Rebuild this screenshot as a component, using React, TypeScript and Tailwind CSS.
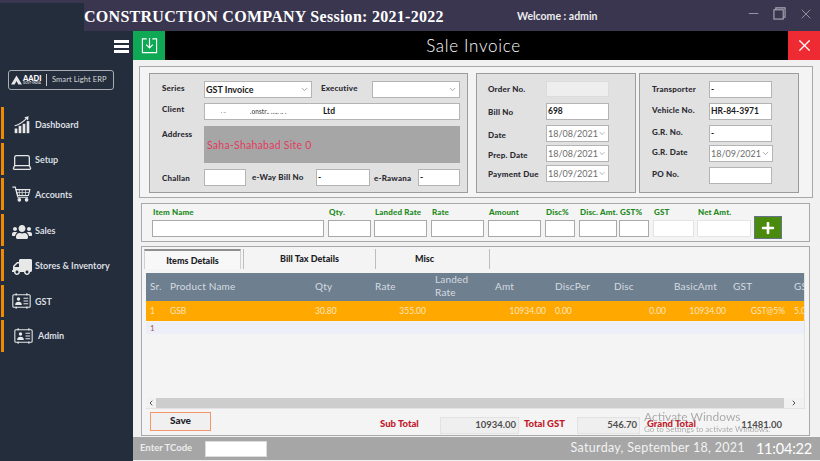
import React from "react";
import { Laptop, ChevronDown, ChevronLeft, ChevronRight, X, Minus } from "lucide-react";
import { FaUsers, FaTruck, FaPlus } from "react-icons/fa";

const Contact = ({ className = "" }: { className?: string }) => (
  <svg viewBox="0 0 28 24" className={className} fill="none">
    <rect x="1" y="2.5" width="26" height="19" rx="1.5" stroke="#e8e8e8" strokeWidth="1.6" />
    <rect x="5" y="0.5" width="2" height="3" fill="#e8e8e8" />
    <rect x="21" y="0.5" width="2" height="3" fill="#e8e8e8" />
    <rect x="5" y="20.5" width="2" height="3" fill="#e8e8e8" />
    <rect x="21" y="20.5" width="2" height="3" fill="#e8e8e8" />
    <circle cx="9.5" cy="9" r="2.6" fill="#e8e8e8" />
    <path d="M4.5 18c0-3.6 2-5 5-5s5 1.400 5 5z" fill="#e8e8e8" />
    <path d="M17 8h7M17 12h7M17 16h7" stroke="#e8e8e8" strokeWidth="1.6" />
  </svg>
);

const Chart = () => (
  <svg viewBox="0 0 24 26" className="w-[16px] h-[19px]" fill="#e8e8e8">
    <rect x="1" y="19" width="4" height="7" />
    <rect x="7" y="15" width="4" height="11" />
    <rect x="13" y="12" width="4" height="14" />
    <rect x="19" y="8" width="4" height="18" />
    <path d="M1 15 C8 13 15 8 19.500 3" stroke="#e8e8e8" strokeWidth="1.6" fill="none" />
    <path d="M15.500 2 L22 0.500 L21 7z" />
  </svg>
);

const Cart = () => (
  <svg viewBox="0 0 26 22" className="w-[19px] h-[16px]" fill="none" stroke="#e8e8e8" strokeWidth="1.5">
    <path d="M0.500 1.500h4l3.500 14h14" />
    <path d="M5.500 5h19l-2 8h-15z" />
    <path d="M10 5v8M14 5v8M18.500 5v8M6.500 9h17" strokeWidth="1" />
    <circle cx="10" cy="19" r="1.800" fill="#e8e8e8" />
    <circle cx="20" cy="19" r="1.800" fill="#e8e8e8" />
  </svg>
);

const nav: { label: string; icon: React.ReactNode; admin?: boolean }[] = [
  { label: "Dashboard", icon: <Chart /> },
  { label: "Setup", icon: <Laptop size={22} strokeWidth={1.4} color="#e8e8e8" /> },
  { label: "Accounts", icon: <Cart /> },
  { label: "Sales", icon: <FaUsers size={20} color="#e8e8e8" /> },
  { label: "Stores & Inventory", icon: <FaTruck size={20} color="#e8e8e8" className="-scale-x-100" /> },
  { label: "GST", icon: <Contact className="w-[19px] h-[16px]" /> },
  { label: "Admin", icon: <Contact className="w-[19px] h-[16px]" />, admin: true },
];

const Label = ({ children, className = "" }: { children: React.ReactNode; className?: string }) => (
  <span className={`text-[8px] font-black text-[#2b2b33] whitespace-nowrap tracking-[0.2px] ${className}`}>{children}</span>
);

const Field = ({ children, className = "" }: { children?: React.ReactNode; className?: string }) => (
  <div className={`h-[17px] bg-white border border-[#b4b4b4] flex items-center px-[1px] text-[8.5px] font-bold text-[#1a1a1a] ${className}`}>{children}</div>
);

const Select = ({ value, className = "", bold = false }: { value?: string; className?: string; bold?: boolean }) => (
  <div className={`h-[17px] bg-white border border-[#b4b4b4] flex items-center justify-between pl-[1px] pr-[2px] text-[9px] ${bold ? "font-bold text-[#1a1a1a] text-[8.5px]" : "text-[#6d6d6d]"} ${className}`}>
    <span className="whitespace-nowrap">{value}</span>
    <ChevronDown size={9} color="#8a8a8a" />
  </div>
);

const items: [string, string, number][] = [
  ["Item Name", "w-[172px]", 1],
  ["Qty.", "w-[43px]", 1],
  ["Landed Rate", "w-[53px]", 1],
  ["Rate", "w-[53px]", 1],
  ["Amount", "w-[53px]", 1],
  ["Disc%", "w-[30px]", 1],
  ["Disc. Amt.", "w-[38px]", 1],
  ["GST%", "w-[30px]", 1],
  ["GST", "w-[41px]", 0],
  ["Net Amt.", "w-[54px]", 0],
];

const itemGap = ["", "ml-[4px]", "ml-[3px]", "ml-[4px]", "ml-[4px]", "ml-[4px]", "ml-[4px]", "ml-[2px]", "ml-[4px]", "ml-[3px]"];

const cols: { h: React.ReactNode; v: string; w: string; cl: string }[] = [
  { h: "Sr.", v: "1", w: "w-[20px]", cl: "pl-[4px]" },
  { h: "Product Name", v: "GSB", w: "w-[145px]", cl: "pl-[4px]" },
  { h: "Qty", v: "30.80", w: "w-[60px]", cl: "pl-[4px]" },
  { h: "Rate", v: "355.00", w: "w-[60px]", cl: "pl-[4px] [&>.v]:text-right [&>.v]:pr-[5px]" },
  { h: <>Landed<br />Rate</>, v: "", w: "w-[60px]", cl: "pl-[4px]" },
  { h: "Amt", v: "10934.00", w: "w-[60px]", cl: "pl-[4px] [&>.v]:text-right [&>.v]:pr-[5px]" },
  { h: "DiscPer", v: "0.00", w: "w-[60px]", cl: "pl-[4px]" },
  { h: "Disc", v: "0.00", w: "w-[60px]", cl: "pl-[3px] [&>.v]:text-right [&>.v]:pr-[5px]" },
  { h: "BasicAmt", v: "10934.00", w: "w-[59px]", cl: "pl-[3px] [&>.v]:text-right [&>.v]:pr-[4px]" },
  { h: "GST", v: "GST@5%", w: "w-[60px]", cl: "pl-[3px] [&>.v]:text-right [&>.v]:pr-[5px]" },
  { h: "GST%", v: "5.00", w: "w-[60px]", cl: "pl-[4px]" },
];

export default function App() {
  return (
    <div className="w-[820px] h-[461px] overflow-hidden flex flex-col bg-[#232d3b] relative" style={{ fontFamily: "Lato, 'Noto Sans', sans-serif" }}>
      {/* Title bar */}
      <header className="h-[31px] shrink-0 bg-[#3a3650] flex items-center">
        <div className="w-[84px] h-[28px] mt-[3px] bg-[#232d3b] shrink-0" />
        <h1 className="text-[16px] font-bold text-white whitespace-nowrap w-[433px] pt-[3px] tracking-[0.28px]" style={{ fontFamily: "'Liberation Serif', serif" }}>
          CONSTRUCTION COMPANY Session: 2021-2022
        </h1>
        <span className="text-[10.5px] font-bold text-[#ececec] whitespace-nowrap pt-[3px]">Welcome : admin</span>
        <div className="ml-auto flex items-center gap-[12px] pr-[6px] pb-[4px]">
          <Minus size={15} color="#a9a9b4" strokeWidth={1.3} />
          <svg viewBox="0 0 14 14" className="w-[13px] h-[13px]" fill="none" stroke="#a9a9b4" strokeWidth="1.200">
            <rect x="1" y="3" width="10" height="10" />
            <path d="M3 3V1h10v10h-2" />
          </svg>
          <X size={16} color="#a9a9b4" strokeWidth={1.2} />
        </div>
      </header>

      <div className="flex flex-1 min-h-0">
        {/* Sidebar */}
        <aside className="w-[133px] shrink-0 flex flex-col">
          <div className="h-[29px] flex items-center justify-end pr-[4px] pt-[2px]">
            <div className="w-[15px] flex flex-col gap-[2.500px]">
              <div className="h-[2.500px] bg-white" />
              <div className="h-[2.500px] bg-white" />
              <div className="h-[2.500px] bg-white" />
            </div>
          </div>
          <div className="mt-[10px] ml-[8px] w-[106px] h-[20px] rounded-[3px] border border-[#a9acb2] flex items-center px-[2px] text-[#d8d8d8] whitespace-nowrap">
            <svg viewBox="0 0 12 10" className="w-[11px] h-[10px]" fill="#e6e6e6"><path d="M6 0 L12 10 H8 L6 6 L4 10 H0z" /></svg>
            <span className="flex flex-col leading-none ml-[1px] w-[22px]">
              <span className="text-[7.500px] font-black text-white">AADI</span>
              <span className="text-[3px] font-bold">GOVT-INDIA</span>
            </span>
            <span className="w-px h-[12px] bg-[#c8c8c8] ml-[1px] mr-[5px]" />
            <span className="text-[7.500px] tracking-[0.1px]">Smart Light ERP</span>
          </div>
          <nav className="mt-[17px] flex flex-col gap-[3.500px]">
            {nav.map((n, i) => (
              <div key={n.label} className="h-[32px] flex items-stretch">
                <div className="w-[3px] ml-[1px] bg-[#f28a00]" />
                <div className={`flex-1 flex ${n.admin ? "pl-[7px]" : "pl-[5px]"}`}>
                  <div className="w-[25px] pt-[8px] flex justify-center shrink-0">{n.icon}</div>
                  <span className={`text-[9px] font-bold text-[#dcdfe3] whitespace-nowrap ml-[1px] ${n.admin ? "mt-[9px] ml-[2px]" : i === 0 ? "mt-[11px]" : "mt-[10px]"}`}>{n.label}</span>
                </div>
              </div>
            ))}
          </nav>
        </aside>

        {/* Main */}
        <main className="flex-1 min-w-0 flex flex-col bg-[#f1f1f1]">
          <div className="h-[29px] shrink-0 bg-black flex items-stretch">
            <div className="w-[32px] bg-[#0fa855] flex items-center justify-center">
              <svg viewBox="0 0 18 18" className="w-[17px] h-[17px]" fill="none" stroke="#fff" strokeWidth="1.200">
                <path d="M6 2H1.500v14.500h15V2H12" />
                <path d="M9 1v10M5.500 8 9 11.500 12.500 8" />
              </svg>
            </div>
            <div className="flex-1 flex items-center justify-center text-white text-[17px] tracking-[0.7px] font-light pr-[6px]">Sale Invoice</div>
            <div className="w-[32px] bg-[#ee2a32] flex items-center justify-center">
              <X size={19} color="#fff" strokeWidth={1.6} />
            </div>
          </div>

          {/* Header form */}
          <section className="mt-[6px] ml-[6px] w-[674px] h-[132px] shrink-0 bg-[#f4f4f4] border border-[#a8a8a8] flex pl-[9px] pt-[6px]">
            {/* Group 1 */}
            <div className="w-[319px] h-[120px] bg-[#e1e1e1] border border-[#9c9c9c] flex flex-col pl-[12px] pt-[7px]">
              <div className="flex items-center h-[17px]">
                <Label className="w-[42px] pb-[3px]">Series</Label>
                <Select value="GST Invoice" bold className="w-[108px]" />
                <Label className="ml-[9px] w-[51px] pb-[3px]">Executive</Label>
                <Select className="w-[88px]" />
              </div>
              <div className="flex mt-[5px]">
                <Label className="w-[42px]">Client</Label>
                <Field className="w-[256px] pl-0 relative overflow-hidden">
                  <span className="ml-[16px] w-[29px] text-[5px] opacity-70 shrink-0">. ..</span>
                  <span className="w-[73px] text-[6.500px] opacity-70 blur-[0.4px] shrink-0 whitespace-nowrap">.onstr.. ..... .. .</span>
                  <span>Ltd</span>
                </Field>
              </div>
              <div className="flex mt-[6px]">
                <Label className="w-[42px] mt-[2px]">Address</Label>
                <div className="w-[256px] h-[37px] bg-[#a6a6a6] flex items-center pl-[3px] pt-[2px] text-[10.500px] text-[#e13c5f] tracking-[0.25px]">Saha-Shahabad Site 0</div>
              </div>
              <div className="flex items-center mt-[6px]">
                <Label className="w-[42px]">Challan</Label>
                <Field className="w-[42px]" />
                <Label className="ml-[6px] w-[64px] pb-[2px]">e-Way Bill No</Label>
                <Field className="w-[54px]">-</Field>
                <Label className="ml-[4px] w-[44px]">e-Rawana</Label>
                <Field className="w-[42px] border-[#3c3c3c]">-</Field>
              </div>
            </div>

            {/* Group 2 */}
            <div className="ml-[8px] w-[160px] h-[120px] bg-[#e1e1e1] border border-[#9c9c9c] flex flex-col pl-[11px] pt-[7px]">
              <div className="flex items-center">
                <Label className="w-[58px] pb-[1px]">Order No.</Label>
                <div className="w-[63px] h-[16px] bg-[#eeeeee] border border-[#dcdcdc]" />
              </div>
              <div className="flex items-center mt-[6px]">
                <Label className="w-[58px]">Bill No</Label>
                <Field className="w-[63px]">698</Field>
              </div>
              <div className="flex items-center mt-[5px]">
                <Label className="w-[58px] pt-[3px]">Date</Label>
                <Select value="18/08/2021" className="w-[63px]" />
              </div>
              <div className="flex items-center mt-[3px]">
                <Label className="w-[58px] pt-[3px]">Prep. Date</Label>
                <Select value="18/08/2021" className="w-[63px]" />
              </div>
              <div className="flex items-center mt-[3px]">
                <Label className="w-[58px]">Payment Due</Label>
                <Select value="18/09/2021" className="w-[63px]" />
              </div>
            </div>

            {/* Group 3 */}
            <div className="ml-[3px] w-[160px] h-[120px] bg-[#e1e1e1] border border-[#9c9c9c] flex flex-col pl-[12px] pt-[7px]">
              <div className="flex items-center">
                <Label className="w-[57px] pb-[2px]">Transporter</Label>
                <Field className="w-[63px]">-</Field>
              </div>
              <div className="flex items-center mt-[5px]">
                <Label className="w-[57px] pb-[4px]">Vehicle No.</Label>
                <Field className="w-[63px]">HR-84-3971</Field>
              </div>
              <div className="flex items-center mt-[5px]">
                <Label className="w-[57px] pb-[4px]">G.R. No.</Label>
                <Field className="w-[63px]">-</Field>
              </div>
              <div className="flex items-center mt-[3px]">
                <Label className="w-[57px] pb-[4px]">G.R. Date</Label>
                <Select value="18/09/2021" className="w-[64px]" />
              </div>
              <div className="flex items-center mt-[5px]">
                <Label className="w-[57px] pb-[4px]">PO No.</Label>
                <Field className="w-[63px]" />
              </div>
            </div>
          </section>

          {/* Item entry */}
          <section className="mt-[5px] ml-[8px] w-[669px] h-[39px] shrink-0 bg-[#f4f4f4] border border-[#a8a8a8] flex items-start pl-[10px] pt-[3px]">
            {items.map(([l, w, dark], i) => (
              <div key={l} className={`flex flex-col ${itemGap[i]} ${w}`}>
                <span className="h-[13px] leading-[10px] pl-[1px] text-[8px] font-black text-[#1c8a1c] whitespace-nowrap tracking-[0.15px]">{l}</span>
                <div className={`h-[17px] bg-white border ${dark ? "border-[#a9a9a9]" : "border-[#e4e4e4]"}`} />
              </div>
            ))}
            <div className="ml-[3px] mt-[9px] w-[28px] h-[23px] bg-[#4a8a0c] border border-[#64748b] flex items-center justify-center">
              <FaPlus size={14} color="#fff" />
            </div>
          </section>

          {/* Details */}
          <section className="mt-[4px] ml-[8px] w-[669px] h-[190px] shrink-0 bg-[#f4f4f4] border border-[#a8a8a8] flex flex-col pl-[2px] pt-[2px]">
            <div className="h-[20px] shrink-0 flex items-stretch text-[9px] font-black text-[#1e1e26]">
              <div className="w-[97px] bg-[#f8f8f8] border-t-2 border-l border-r border-t-[#8f8f8f] border-l-[#d0d0d0] border-r-[#d0d0d0] flex items-center justify-center pt-[1px]">Items Details</div>
              <div className="w-[132px] ml-[2px] border-l border-[#bdbdbd] flex items-center justify-center">Bill Tax Details</div>
              <div className="w-[115px] border-l border-[#bdbdbd] flex items-center justify-center border-r pr-[16px]">Misc</div>
            </div>
            <div className="mt-[4px] ml-[2px] w-[659px] h-[136px] shrink-0 border-r border-b border-[#e3e3e3] flex flex-col overflow-hidden">
              <div className="h-[28px] shrink-0 bg-[#6e7f8f] flex text-[10px] leading-[13px] text-[#d6dce2] tracking-[0.2px] pb-[2px]">
                {cols.map((c, i) => (
                  <div key={i} className={`${c.w} shrink-0 ${c.cl} flex items-center whitespace-nowrap`}>{c.h}</div>
                ))}
              </div>
              <div className="h-[20px] shrink-0 bg-[#ffa800] flex items-center text-[8.500px] text-[#fbe6c0]">
                {cols.map((c, i) => (
                  <div key={i} className={`${c.w} shrink-0 ${c.cl}`}>
                    <div className="v whitespace-nowrap">{c.v}</div>
                  </div>
                ))}
              </div>
              <div className="mt-[1px] h-[12px] shrink-0 bg-[#eceff8] pl-[4px] text-[8px] leading-[12px] text-[#a05555]">1</div>
              <div className="flex-1" />
              <div className="h-[10px] shrink-0 bg-[#f1f1f1] flex items-center">
                <div className="w-[10px] flex justify-center"><ChevronLeft size={8} color="#333" strokeWidth={2.5} /></div>
                <div className="w-[628px] h-full bg-[#cdcdcd]" />
                <div className="flex-1 flex justify-center"><ChevronRight size={8} color="#333" strokeWidth={2.5} /></div>
              </div>
            </div>
            <div className="mt-[2px] flex items-start">
              <div className="ml-[6px] mt-[1px] w-[61px] h-[19px] bg-[#f0f0f0] border border-[#f4956a] flex items-center justify-center text-[10px] font-black text-[#23232e] pb-[2px]">Save</div>
              <div className="ml-[169px] mt-[6px] w-[60px] text-[9.500px] font-black text-[#c2182b] whitespace-nowrap">Sub Total</div>
              <div className="mt-[6px] w-[79px] h-[17px] border border-[#e2e2e2] bg-[#efefef] flex items-center justify-end pr-[2px] text-[9.500px] font-bold text-[#4f4f4f]">10934.00</div>
              <div className="ml-[5px] mt-[6px] w-[53px] text-[9.500px] font-black text-[#c2182b] whitespace-nowrap">Total GST</div>
              <div className="mt-[6px] w-[63px] h-[17px] border border-[#e2e2e2] bg-[#efefef] flex items-center justify-end pr-[2px] text-[9.500px] font-bold text-[#4f4f4f]">546.70</div>
              <div className="ml-[7px] mt-[6px] w-[55px] text-[9.500px] font-black text-[#c2182b] whitespace-nowrap">Grand Total</div>
              <div className="mt-[6px] w-[81px] h-[17px] flex items-center justify-end pr-[1px] text-[9.500px] font-bold text-[#4f4f4f]">11481.00</div>
            </div>
          </section>

          {/* Status bar */}
          <footer className="mt-[1px] h-[23px] shrink-0 bg-[#a6a6a6] flex items-center">
            <span className="ml-[7px] w-[65px] text-[9.500px] font-bold text-[#ececec] whitespace-nowrap">Enter TCode</span>
            <div className="w-[62px] h-[16px] bg-white border border-[#dcdcdc]" />
            <span className="ml-auto text-[12.500px] text-[#f2f2f2] tracking-[0.3px] whitespace-nowrap">Saturday, September 18, 2021</span>
            <span className="ml-[11px] mr-[8px] text-[14.500px] text-white tracking-[-0.2px] whitespace-nowrap">11:04:22</span>
          </footer>
        </main>
      </div>

      {/* Windows activation watermark */}
      <div className="absolute left-[644px] top-[411px] leading-none text-[#9a9a9a] pointer-events-none whitespace-nowrap opacity-80">
        <div className="text-[12px]">Activate Windows</div>
        <div className="text-[8px] mt-[2px]">Go to Settings to activate Windows.</div>
      </div>
    </div>
  );
}
